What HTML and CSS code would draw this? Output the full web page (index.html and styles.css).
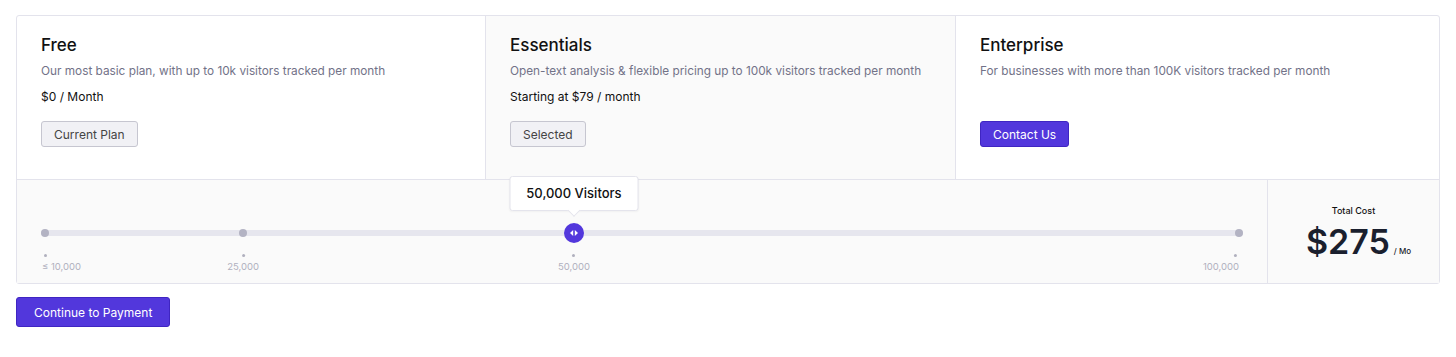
FILE: index.html
```html
<!DOCTYPE html>
<html lang="en">
<head>
    <meta charset="UTF-8">
    <title>Choose a Plan</title>
    <link rel="stylesheet" href="styles.css">
</head>
<body>
    <div class="page">
        <div class="plan-box">
            <div class="plans">
                <div class="plan">
                    <h2>Free</h2>
                    <p class="desc">Our most basic plan, with up to 10k visitors tracked per month</p>
                    <p class="price">$0 / Month</p>
                    <button class="btn btn-muted">Current Plan</button>
                </div>
                <div class="plan plan-active">
                    <h2>Essentials</h2>
                    <p class="desc">Open-text analysis &amp; flexible pricing up to 100k visitors tracked per month</p>
                    <p class="price">Starting at $79 / month</p>
                    <button class="btn btn-muted">Selected</button>
                </div>
                <div class="plan">
                    <h2>Enterprise</h2>
                    <p class="desc">For businesses with more than 100K visitors tracked per month</p>
                    <button class="btn btn-primary">Contact Us</button>
                </div>
            </div>

            <div class="usage">
                <div class="slider">
                    <div class="track">
                        <div class="rail">
                            <span class="stop" style="left: 0%"></span>
                            <span class="stop" style="left: 16.6%"></span>
                            <span class="stop" style="left: 100%"></span>
                            <span class="thumb" style="left: 44.3%">
                                <span class="tooltip">50,000 Visitors</span>
                                <svg width="20" height="20" viewBox="0 0 20 20">
                                    <circle cx="10" cy="10" r="10" fill="#5237dc"/>
                                    <path d="M9.2 7 L6 10 L9.2 13 Z" fill="#fff"/>
                                    <path d="M10.8 7 L14 10 L10.8 13 Z" fill="#fff"/>
                                </svg>
                            </span>
                        </div>
                    </div>
                    <div class="ticks">
                        <span class="tick tick-first" style="left: 0%">≤ 10,000</span>
                        <span class="tick" style="left: 16.6%">25,000</span>
                        <span class="tick" style="left: 44.3%">50,000</span>
                        <span class="tick tick-last" style="left: 100%">100,000</span>
                    </div>
                </div>
                <div class="total">
                    <div class="total-label">Total Cost</div>
                    <div class="total-amount">$275<span class="per">/ Mo</span></div>
                </div>
            </div>
        </div>

        <button class="btn btn-primary btn-continue">Continue to Payment</button>
    </div>
</body>
</html>
```

FILE: styles.css
```css
* {
    margin: 0;
    padding: 0;
    box-sizing: border-box;
}

body {
    font-family: Inter, "Noto Sans", sans-serif;
    background: #fff;
    color: #111;
}

.page {
    padding: 15px 16px;
}

.plan-box {
    border: 1px solid #e3e3ec;
    border-radius: 3px;
    width: 1424px;
}

.plans {
    display: grid;
    grid-template-columns: 469px 470px 1fr;
    border-bottom: 1px solid #e3e3ec;
}

.plan {
    display: flex;
    flex-direction: column;
    align-items: flex-start;
    padding: 18px 25px 32px 24px;
    border-right: 1px solid #e3e3ec;
}

.plan:last-child {
    border-right: none;
}

.plan-active {
    background: #fafafa;
}

h2 {
    font-size: 17px;
    font-weight: 500;
    line-height: 22px;
    margin-bottom: 6px;
    color: #111;
}

.desc {
    font-size: 11.8px;
    line-height: 18px;
    color: #727288;
    margin-bottom: 8px;
}

.price {
    font-size: 12px;
    line-height: 18px;
    color: #111;
    margin-bottom: 15px;
}

.btn {
    font-family: inherit;
    font-size: 12px;
    height: 26px;
    padding: 0 12px;
    border-radius: 3px;
    cursor: pointer;
}

.plan .btn {
    margin-top: auto;
}

.btn-muted {
    background: #f1f1f5;
    border: 1px solid #c6c6d0;
    color: #444;
}

.btn-primary {
    background: #5237dc;
    border: 1px solid #3f25c2;
    color: #fff;
}

.btn-continue {
    margin-top: 13px;
    height: 30px;
    padding: 0 17px;
}

.usage {
    display: grid;
    grid-template-columns: 1fr 172px;
    background: #fafafa;
}

.slider {
    padding: 50px 24px 0;
    height: 103px;
}

.track {
    height: 6px;
    background: #e6e6ee;
    border-radius: 3px;
    padding: 0 4px;
}

.rail {
    position: relative;
    height: 6px;
}

.stop {
    position: absolute;
    top: -1px;
    width: 8px;
    height: 8px;
    margin-left: -4px;
    border-radius: 50%;
    background: #b3b3c3;
}

.thumb {
    position: absolute;
    top: -7px;
    width: 20px;
    height: 20px;
    margin-left: -10px;
}

.thumb svg {
    display: block;
}

.tooltip {
    position: absolute;
    bottom: 32px;
    left: 50%;
    transform: translateX(-50%);
    width: 129px;
    height: 35px;
    line-height: 33px;
    text-align: center;
    font-size: 13px;
    font-weight: 500;
    color: #111;
    background: #fff;
    border: 1px solid #e4e4ec;
    border-radius: 3px;
    box-shadow: 0 1px 2px rgba(0, 0, 0, 0.04);
    white-space: nowrap;
}

.tooltip::after {
    content: "";
    position: absolute;
    left: 50%;
    bottom: -5px;
    width: 8px;
    height: 8px;
    margin-left: -4px;
    background: #fff;
    border-right: 1px solid #e4e4ec;
    border-bottom: 1px solid #e4e4ec;
    transform: rotate(45deg);
}

.ticks {
    position: relative;
    margin: 0 4px;
    height: 40px;
}

.tick {
    position: absolute;
    top: 18px;
    transform: translateX(-50%);
    font-size: 9.5px;
    color: #b0b0be;
    white-space: nowrap;
    padding-top: 7px;
}

.tick::before {
    content: "";
    position: absolute;
    top: 0;
    left: 50%;
    width: 3px;
    height: 3px;
    margin-left: -1.5px;
    border-radius: 50%;
    background: #b0b0be;
}

.tick-first {
    transform: translateX(-3px);
}

.tick-first::before {
    left: 3px;
}

.tick-last {
    transform: translateX(-100%);
}

.tick-last::before {
    left: auto;
    right: 2px;
}

.total {
    border-left: 1px solid #e3e3ec;
    display: flex;
    flex-direction: column;
    align-items: center;
    padding-top: 25px;
}

.total-label {
    font-size: 9px;
    font-weight: 500;
    color: #111;
    margin-bottom: 6px;
}

.total-amount {
    font-size: 34px;
    font-weight: 600;
    color: #1a1f2e;
    line-height: 40px;
    padding-left: 10px;
}

.per {
    font-size: 8px;
    font-weight: 500;
    margin-left: 4px;
}
```
